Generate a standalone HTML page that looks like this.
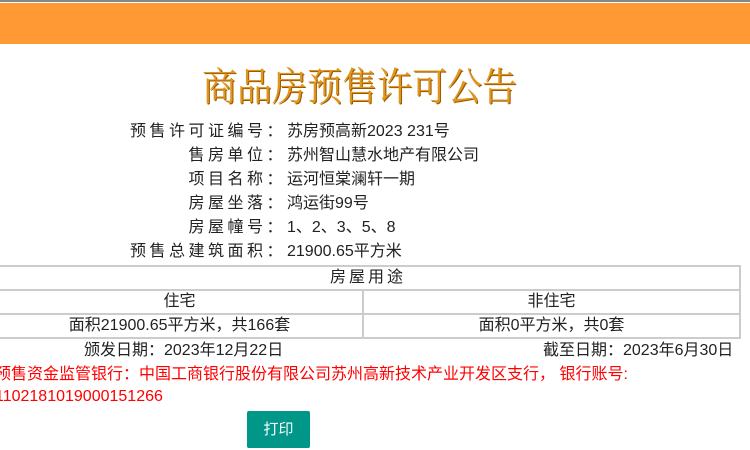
<!DOCTYPE html>
<html><head><meta charset="utf-8"><style>
*{margin:0;padding:0;box-sizing:border-box}
body{width:750px;height:450px;overflow:hidden;background:#fff;font-family:"Liberation Sans","Noto Sans CJK SC",sans-serif;color:#222;position:relative}
.top{position:absolute;left:0;top:0;width:750px;height:2px;background:#888}
.bar{position:absolute;left:0;top:3px;width:750px;height:41px;background:#ff9933}
.title{position:absolute;left:202px;top:60px;white-space:nowrap;font-family:"Noto Serif CJK SC",serif;font-size:35px;line-height:44px;color:#e0961e;text-shadow:1px 1px 0 #9a5a00;transform:scaleY(1.12);transform-origin:top left}
.row{position:absolute;left:0;width:750px;height:24px;line-height:24px;font-size:16px;white-space:nowrap}
.lab{position:absolute;right:464px;letter-spacing:3.5px;text-align:right}
.val{position:absolute;left:287px}
table{position:absolute;left:-5px;top:265px;width:746px;border-collapse:collapse;font-size:16px}
td{border:2px solid #ccc;height:24px;text-align:center;line-height:20px;padding:0}
.d{position:absolute;top:339px;font-size:16px;line-height:24px}
.red{position:absolute;left:-5px;font-size:16px;color:#f00;line-height:22px;white-space:nowrap}
.btn{position:absolute;left:247px;top:411px;width:63px;height:37px;background:#009688;color:#fff;font-size:15px;line-height:37px;text-align:center;border-radius:2px}
</style></head><body>
<div class="top"></div><div class="bar"></div>
<div class="title">商品房预售许可公告</div>
<div class="row" style="top:120px"><span class="lab">预售许可证编号：</span><span class="val">苏房预高新2023 231号</span></div>
<div class="row" style="top:144px"><span class="lab">售房单位：</span><span class="val">苏州智山慧水地产有限公司</span></div>
<div class="row" style="top:168px"><span class="lab">项目名称：</span><span class="val">运河恒棠澜轩一期</span></div>
<div class="row" style="top:192px"><span class="lab">房屋坐落：</span><span class="val">鸿运街99号</span></div>
<div class="row" style="top:216px"><span class="lab">房屋幢号：</span><span class="val">1、2、3、5、8</span></div>
<div class="row" style="top:240px"><span class="lab">预售总建筑面积：</span><span class="val">21900.65平方米</span></div>
<table>
<tr><td colspan="2" style="letter-spacing:3px">房屋用途</td></tr>
<tr><td style="width:367px">住宅</td><td>非住宅</td></tr>
<tr><td>面积21900.65平方米，共166套</td><td>面积0平方米，共0套</td></tr>
</table>
<div class="d" style="left:84px">颁发日期：2023年12月22日</div>
<div class="d" style="left:543px">截至日期：2023年6月30日</div>
<div class="red" style="top:364px">预售资金监管银行：中国工商银行股份有限公司苏州高新技术产业开发区支行， 银行账号:</div>
<div class="red" style="top:386px">1102181019000151266</div>
<div class="btn">打印</div>
</body></html>
